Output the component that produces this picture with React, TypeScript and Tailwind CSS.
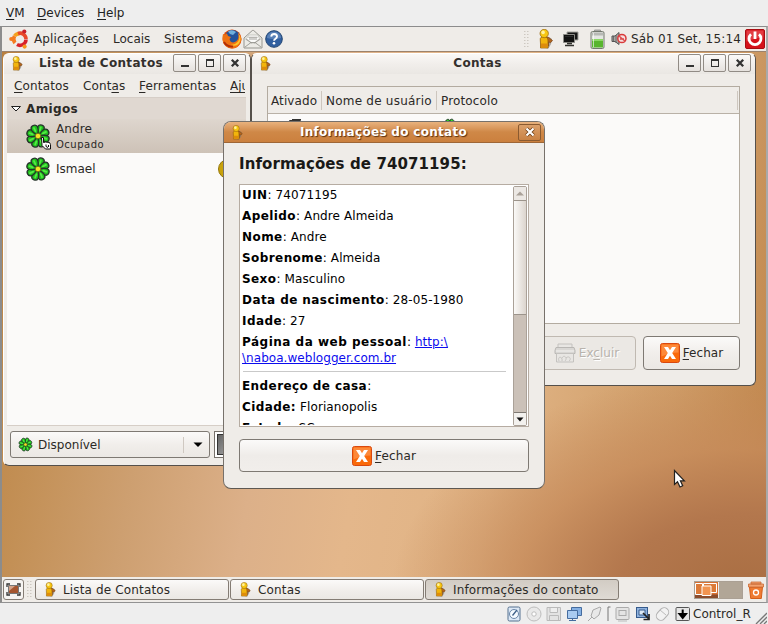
import React from "react";

type Box = { className?: string };

const Buddy = ({ className = "" }: Box) => (
  <svg viewBox="0 0 15 20" className={className}>
    <path d="M4 18.500l6 1 2.500-4.500 1-5-3-2z" fill="#7d756b" opacity=".6" />
    <path d="M8 8l1.500 0 4.500 3.500-1.800 2-2.200-.5v4l-2 1.500z" fill="#b3661f" stroke="#7a4212" strokeWidth=".7" />
    <path d="M1.800 11C1.200 9 3 7.500 5.300 7.500S9.800 9 9.500 12v7H2v-4z" fill="#f2b50c" stroke="#94600a" strokeWidth=".8" />
    <path d="M2.400 14.500h6.700v4.100H2.400z" fill="#dd8c0b" />
    <circle cx="5.700" cy="4.500" r="4.200" fill="#f7c713" stroke="#94600a" strokeWidth=".7" />
    <circle cx="4.600" cy="3.400" r="1.800" fill="#fff2a0" />
  </svg>
);

const petals = [0, 45, 90, 135, 180, 225, 270, 315];
const Flower = ({ className = "" }: Box) => (
  <svg viewBox="0 0 26 26" className={className}>
    <circle cx="13" cy="13" r="8.500" fill="#26332a" />
    {petals.map((a) => (
      <g key={a} transform={`rotate(${a + 20} 13 13)`}>
        <path d="M13 12C11 9.500 9.300 6.500 9.700 4C10.200 .6 15.800 .6 16.300 4C16.700 6.500 15 9.500 13 12z" fill="#1fc01e" stroke="#26332a" strokeWidth="1.300" />
        <path d="M12.700 7.500V4" stroke="#55ea44" strokeWidth="1.800" strokeLinecap="round" />
      </g>
    ))}
    <circle cx="13" cy="13" r="2.800" fill="#f6e424" stroke="#5a6418" strokeWidth=".8" />
  </svg>
);

const CloseBadge = () => (
  <svg viewBox="0 0 20 20" className="h-5 w-5 shrink-0">
    <rect x=".5" y=".5" width="19" height="19" rx="2" fill="#fa6a0a" stroke="#d9480f" />
    <path d="M1.500 1.500h17v8q-8 0-17 4z" fill="#ff9a55" opacity=".65" />
    <path d="M4 4h4l2 3.300L12 4h4l-3.800 6 3.800 6h-4l-2-3.300L8 16H4l3.800-6z" fill="#fff" />
  </svg>
);

const Ubuntu = () => (
  <svg viewBox="0 0 20 20" className="h-5 w-5 shrink-0">
    <g fill="none" strokeWidth="3.600">
      <path d="M5.900 6.400A6 6 0 0 1 11 4" stroke="#f5a11c" transform="translate(-.3 .6)" />
      <path d="M5.500 7.200A6 6 0 0 0 6 14" stroke="#f47b20" />
      <path d="M9 4.500A6 6 0 0 1 17 10" stroke="#e8482a" />
      <path d="M17 10.500A6 6 0 0 1 8 15.500" stroke="#d8202a" />
    </g>
    <circle cx="2.300" cy="10" r="2.100" fill="#f47b20" />
    <circle cx="15.300" cy="2.500" r="2.100" fill="#c8202a" />
    <circle cx="15.600" cy="17.600" r="2.100" fill="#f5941c" />
  </svg>
);

const Firefox = () => (
  <svg viewBox="0 0 20 20" className="h-5 w-5 shrink-0">
    <circle cx="10" cy="10" r="9.500" fill="#d9480c" />
    <circle cx="10.500" cy="8.500" r="7.600" fill="#24539a" />
    <path d="M6 2.500Q10 0 14 3l-3 3-3-1z" fill="#6fb0dc" />
    <path d="M1 5Q3 6 5 4.500L6 7l3 1-1.500 2 1 2.500q3 2 6-.5 3-3 1.500-8Q20 7 19.200 12 17 19.500 10 19.500 2.500 19 .8 12 0 8 1 5z" fill="#ee7112" />
    <path d="M16 4q3 5-.5 9-3 3.500-7 2.500 5 3 8.500-1Q20.500 9 16 4z" fill="#fbc62b" />
    <path d="M2 13q3 5 9 4.500" fill="none" stroke="#b12f08" strokeWidth="1.800" />
  </svg>
);

const Mail = () => (
  <svg viewBox="0 0 20 20" className="h-5 w-5 shrink-0">
    <path d="M1 9l8.300-7.500h1.400L19 9v10H1z" fill="#ecebe6" stroke="#96958f" />
    <path d="M3.500 9.500L6 6h9l1.500 3.500-5 4.500h-3z" fill="#fbfbf9" stroke="#b5b4ae" strokeWidth=".7" />
    <path d="M5.500 8.300h9M6 10h8M2 18l6-4.500h4l6 4.500M2.500 10l6 4M17.500 10l-6 4" stroke="#8f8e88" strokeWidth=".8" fill="none" />
  </svg>
);

const Help = () => (
  <svg viewBox="0 0 18 18" className="mt-px h-[18px] w-[18px] shrink-0">
    <circle cx="9" cy="9" r="8.300" fill="#315f9f" stroke="#234672" />
    <path d="M2 8a7 6.500 0 0 1 14 0q-7 2-14 0z" fill="#7498c8" opacity=".6" />
    <path d="M6.200 6.600Q6.500 4 9.200 4q2.800.1 2.800 2.400 0 1.500-1.700 2.400-1.200.6-1.200 2" fill="none" stroke="#fff" strokeWidth="1.900" />
    <circle cx="9" cy="13.200" r="1.300" fill="#fff" />
  </svg>
);

const Network = () => (
  <svg viewBox="0 0 18 18" className="h-[18px] w-[18px]">
    <path d="M5 2h11v8H5z" fill="#161616" stroke="#a3a39d" />
    <path d="M1.500 4.500h11v8h-11z" fill="#111" stroke="#8b8b86" />
    <path d="M3 15.500h9M5 13.500h5" stroke="#33332f" strokeWidth="1.600" />
    <path d="M3 6.500h8" stroke="#333" strokeWidth=".7" />
  </svg>
);

const Battery = () => (
  <svg viewBox="0 0 15 20" className="h-5 w-[15px]">
    <path d="M4.500 1h6v2h-6z" fill="#b9b9b5" stroke="#82827e" strokeWidth=".7" />
    <rect x="1" y="2.500" width="13" height="17" rx="1.500" fill="#e4e6e2" stroke="#73786e" />
    <path d="M2 3.500h11v3H2z" fill="#b7b9b5" />
    <path d="M2 10h11v8.500H2z" fill="#58b52d" />
    <path d="M2 10h11v2H2z" fill="#8bd764" />
    <path d="M3.500 4v14" stroke="#fff" opacity=".6" />
  </svg>
);

const Speaker = () => (
  <svg viewBox="0 0 16 14" className="h-[14px] w-4">
    <path d="M1 4h3l4-3.500v12L4 9.500H1z" fill="#a9a9a5" stroke="#555" />
    <path d="M2.500 4v5.500M5 3v8" stroke="#555" strokeWidth=".7" />
    <circle cx="10.900" cy="6.500" r="4.100" fill="#f5dede" stroke="#d93a3a" strokeWidth="1.500" />
    <path d="M8 4l5.800 5M9 7h4" stroke="#dc4c4c" strokeWidth="1.400" />
  </svg>
);

const Power = () => (
  <svg viewBox="0 0 20 20" className="h-5 w-5">
    <rect x=".5" y=".5" width="19" height="19" rx="1.500" fill="#d5121a" stroke="#a80c12" />
    <path d="M1.500 1.500h17v7q-8 0-17 4z" fill="#f0666a" opacity=".5" />
    <path d="M6 5.200a6 6 0 1 0 8 0" fill="none" stroke="#fff" strokeWidth="2.800" />
    <path d="M10 2.500v7.500" stroke="#fff" strokeWidth="2.800" />
  </svg>
);

const Grip = () => (
  <svg viewBox="0 0 5 17" className="h-[17px] w-[5px]">
    {[0, 3, 6, 9, 12, 15].map((y) => (
      <path key={y} d={`M0 ${y + 0.5}h1.500M3 ${y + 0.5}h1.500`} stroke="#cdc8c1" />
    ))}
  </svg>
);

const U = ({ children }: { children: React.ReactNode }) => (
  <span className="underline decoration-1 underline-offset-2">{children}</span>
);

const WinButton = ({ kind }: { kind: "min" | "max" | "close" }) => (
  <span className="flex h-[18px] w-[23px] items-center justify-center rounded-[2px] border border-[#918b85] bg-linear-to-b from-[#fbfaf9] to-[#e6e2de]">
    <svg viewBox="0 0 10 10" className="h-[10px] w-[10px]" fill="none" stroke="#333">
      {kind === "min" && <path d="M1 8h8" strokeWidth="2" />}
      {kind === "max" && (
        <>
          <rect x="1.500" y="1.500" width="7" height="7" />
          <path d="M1 2h8" strokeWidth="2" />
        </>
      )}
      {kind === "close" && <path d="M1.800 1.800l6.400 6.400M8.200 1.800L1.800 8.200" strokeWidth="2.300" />}
    </svg>
  </span>
);

const TitleBar = ({ title, titleClass }: { title: string; titleClass: string }) => (
  <div className="flex h-5 shrink-0 items-start bg-linear-to-b from-[#faf8f6] via-[#f1eeeb] to-[#eae7e3] pr-[4px] pl-[8px]">
    <Buddy className="mt-[2px] h-[15px] w-[11px]" />
    <b className={`flex-1 text-center text-[12px] leading-[18px] text-[#33302d] ${titleClass}`}>{title}</b>
    <span className="flex gap-[2px]">
      <WinButton kind="min" />
      <WinButton kind="max" />
      <WinButton kind="close" />
    </span>
  </div>
);

const ContactsWindow = () => (
  <section className="absolute top-[26px] left-px flex h-[413px] w-[248px] flex-col overflow-hidden rounded-[6px] border border-[#55504b] border-t-white border-l-white bg-[#efece8]">
    <TitleBar title="Lista de Contatos" titleClass="pl-[6px] tracking-[.32px]" />
    <div className="flex flex-1 flex-col pr-[4px] pl-[3px]">
      <nav className="flex h-6 shrink-0 items-center overflow-hidden border-b border-[#d6cec7] pt-px pl-[7px] whitespace-nowrap">
        <span className="w-[69px] shrink-0 tracking-[.15px]"><U>C</U>ontatos</span>
        <span className="w-[56px] shrink-0 tracking-[.1px]">Cont<U>a</U>s</span>
        <span className="w-[91px] shrink-0 tracking-[.15px]"><U>F</U>erramentas</span>
        <span className="w-[15px] shrink-0 overflow-hidden"><U>Aju</U></span>
      </nav>
      <div className="flex flex-1 flex-col overflow-hidden border-b border-[#d6cec7] bg-[#fbfaf9]">
        <div className="flex h-[21px] shrink-0 items-center bg-[#e0d8d1] pl-[3px]">
          <svg viewBox="0 0 12 8" className="h-2 w-3"><path d="M1.500 1.500h9L6 6z" fill="#fff" stroke="#222" /></svg>
          <b className="ml-[4px] text-[12px] tracking-[.35px]">Amigos</b>
        </div>
        <div className="flex h-[34px] shrink-0 items-center bg-linear-to-b from-[#ded6ce] to-[#cdc2b7] pl-[18px]">
          <span className="relative flex">
            <Flower className="h-[26px] w-[26px]" />
            <svg viewBox="0 0 12 14" className="absolute top-[13px] left-[15px] h-[14px] w-3">
              <path d="M1.500 1.500h2v5l2-.5 4 .5 1 2v4.500h-5L2 9.500z" fill="#fff" stroke="#111" />
              <path d="M6 8.500v2l2 1M8.500 9v2" stroke="#111" fill="none" />
            </svg>
          </span>
          <span className="ml-[5px] flex flex-col pt-px leading-[15px]">
            <span className="tracking-[.1px]">Andre</span>
            <span className="text-[10px] tracking-[.5px]">Ocupado</span>
          </span>
        </div>
        <div className="flex h-[32px] shrink-0 items-center pl-[18px]">
          <Flower className="h-[26px] w-[26px]" />
          <span className="ml-[5px]">Ismael</span>
          <span className="mr-[8px] ml-auto h-5 w-5 rounded-full border border-[#94760b] bg-[#c9a20a]" />
        </div>
      </div>
      <div className="flex h-[39px] shrink-0 gap-1 pt-[5px] pl-[3px]">
        <div className="flex h-[27px] w-[200px] shrink-0 items-center rounded-[3px] border border-[#7e7973] bg-linear-to-b from-[#fbfaf9] via-[#f1eeeb] to-[#ebe8e4] pr-[6px] pl-[7px]">
          <Flower className="h-[15px] w-[15px]" />
          <span className="ml-[5px] flex-1 pt-px">Disponível</span>
          <span className="h-4 w-px bg-[#cfc8c1]" />
          <svg viewBox="0 0 10 6" className="ml-[9px] h-[6px] w-[10px]"><path d="M.5.5h9L5 5z" fill="#000" /></svg>
        </div>
        <div className="h-[27px] w-6 border border-[#77716b] bg-white p-[2px]">
          <div className="h-full border border-[#333] bg-linear-to-br from-[#666] to-[#aaa]" />
        </div>
      </div>
    </div>
  </section>
);

const AccountsWindow = () => (
  <section className="absolute top-[26px] left-[249px] flex h-[333px] w-[505px] flex-col overflow-hidden rounded-[6px] border border-[#55504b] border-t-white bg-[#efece8]">
    <TitleBar title="Contas" titleClass="pl-[6px] tracking-[.3px]" />
    <div className="mx-[15px] mt-[12px] flex h-[238px] shrink-0 flex-col border border-[#b3aba0] bg-[#fbfaf9]">
      <div className="flex h-[27px] items-center border-b border-[#b9b1a7] bg-[#efece8] pl-[3px]">
        <span className="h-[19px] w-[51px] border-r border-[#cdc6be] pt-px tracking-[.1px]">Ativado</span>
        <span className="h-[19px] w-[115px] border-r border-[#cdc6be] pt-px pl-[4px] tracking-[.23px]">Nome de usuário</span>
        <span className="mr-px h-[19px] flex-1 border-r border-[#cdc6be] pt-px pl-[4px] tracking-[.15px]">Protocolo</span>
      </div>
      <div className="flex pt-[4px] pl-[19px]">
        <svg viewBox="0 0 14 14" className="h-[14px] w-[14px]"><path d="M2.500 2.500h11v11h-11zM5 1.500h9" fill="#fff" stroke="#333" /></svg>
        <Flower className="ml-[141px] h-4 w-4" />
      </div>
    </div>
    <div className="mt-[12px] flex justify-end gap-[7px] pr-[15px]">
      <div className="flex h-[34px] w-[98px] items-center justify-center gap-[3px] rounded-[4px] border border-[#c0b9b1] bg-[#ebe8e4] pr-[1px] text-[#b8b3ad] [text-shadow:1px_1px_#fff]">
        <svg viewBox="0 0 22 20" className="h-5 w-[22px]">
          <path d="M4 1h14v4H4z" fill="#e8e6e3" stroke="#c4c2bf" />
          <path d="M2 4.500h18l1 3v3H1v-3z" fill="#d9d7d4" stroke="#b9b7b4" />
          <path d="M2 8h18" stroke="#f4f3f1" />
          <path d="M2.500 10.500h17v8.500h-17z" fill="#e8e6e3" stroke="#c4c2bf" />
          <path d="M5 18c-2-5 4-5 3 0m0-3c2-4 6 0 3 3m1-3c3-3 6 1 3 3" fill="none" stroke="#c7c5c2" />
        </svg>
        <span>Ex<U>c</U>luir</span>
      </div>
      <div className="flex h-[34px] w-[97px] items-center justify-center gap-[3px] rounded-[4px] border border-[#7e7973] bg-linear-to-b from-[#fbfaf9] via-[#f1eeeb] to-[#ebe8e4]">
        <CloseBadge />
        <span className="tracking-[.1px]"><U>F</U>echar</span>
      </div>
    </div>
  </section>
);

const Row = ({ label, value, colon = ":" }: { label: string; value: string; colon?: string }) => (
  <p className="h-[21px] tracking-[.1px]"><b className="tracking-[.42px]">{label}</b>{colon} {value}</p>
);

const InfoDialog = () => (
  <section className="absolute top-[94px] left-[221px] flex h-[368px] w-[322px] flex-col overflow-hidden rounded-[8px] border border-[#77716b] border-b-[#5d5852] bg-[#efece8]">
    <header className="flex h-[21px] shrink-0 items-center border-b border-[#9e6636] bg-linear-to-b from-[#e9b27d] via-[#cf8847] to-[#cb803e] pr-[3px] pl-[8px]">
      <Buddy className="h-[15px] w-[11px]" />
      <b className="flex-1 pl-[6px] text-center text-[12px] tracking-[.3px] text-white [text-shadow:1px_1px_1px_#5b3010]">Informações do contato</b>
      <span className="flex h-[17px] w-[23px] items-center justify-center rounded-[2px] border border-[#8a5a30] bg-linear-to-b from-[#dba06a] to-[#c98244]">
        <svg viewBox="0 0 10 10" className="h-[10px] w-[10px]">
          <path d="M1.500 1.500l7 7M8.500 1.500l-7 7" stroke="#6d3d15" strokeWidth="3.800" />
          <path d="M1.500 1.500l7 7M8.500 1.500l-7 7" stroke="#fff" strokeWidth="2.200" />
        </svg>
      </span>
    </header>
    <h1 className="mt-[11px] ml-[15px] h-[30px] text-[15px] leading-5 font-bold tracking-[.1px] whitespace-nowrap text-[#1a1917]">Informações de 74071195:</h1>
    <div className="ml-[15px] flex h-[243px] w-[290px] shrink-0 border border-[#b6aca2] bg-[#fff]">
      <div className="h-[240px] w-[273px] shrink-0 overflow-hidden pt-[2px] pl-[2px] leading-4 text-black">
        <Row label="UIN" value="74071195" />
        <Row label="Apelido" value="Andre Almeida" />
        <Row label="Nome" value="Andre" />
        <Row label="Sobrenome" value="Almeida" />
        <Row label="Sexo" value="Masculino" />
        <Row label="Data de nascimento" value="28-05-1980" />
        <Row label="Idade" value="27" />
        <p className="h-[37px] tracking-[.05px]">
          <b className="tracking-[.5px]">Página da web pessoal</b>: <span className="text-[#0c0cee] underline">http:\<br />\naboa.weblogger.com.br</span>
        </p>
        <div className="mr-[7px] ml-px h-[7px] border-t border-[#c9c9c9]" />
        <Row label="Endereço de casa" value="" />
        <Row label="Cidade:" colon="" value="Florianopolis" />
        <Row label="Estado" value="SC" />
      </div>
      <div className="mt-px flex w-[14px] flex-col rounded-[2px] border border-[#aaa198] bg-[#cbc1b8]">
        <span className="flex h-[13px] items-center justify-center bg-[#ece8e4]">
          <svg viewBox="0 0 8 5" className="h-[5px] w-2"><path d="M0 4.500L4 .5l4 4z" fill="#aaa198" /></svg>
        </span>
        <span className="h-[115px] border-y border-[#9c948b] bg-linear-to-r from-[#faf9f7] to-[#dcd5ce]" />
        <span className="mt-auto flex h-[13px] items-center justify-center border-t border-[#7e7973] bg-[#f3f1ee]">
          <svg viewBox="0 0 8 5" className="h-[5px] w-2"><path d="M.5.5h7L4 4.500z" fill="#111" /></svg>
        </span>
      </div>
    </div>
    <div className="mt-[12px] ml-[15px] flex h-[33px] w-[290px] items-center justify-center gap-[3px] rounded-[4px] border border-[#7e7973] bg-linear-to-b from-[#fbfaf9] via-[#efece9] to-[#f1eeeb]">
      <CloseBadge />
      <span className="tracking-[.15px]"><U>F</U>echar</span>
    </div>
  </section>
);

const Task = ({ label, active = false }: { label: string; active?: boolean }) => (
  <div className={`flex h-[21px] w-[194px] items-center rounded-[3px] border border-[#847c74] pl-[9px] tracking-[.15px] ${active ? "bg-linear-to-b from-[#d2ccc4] to-[#dfdad4]" : "bg-linear-to-b from-[#fbfaf9] via-[#f2efec] to-[#ebe8e4]"}`}>
    <Buddy className="mr-[7px] h-[15px] w-[11px]" />
    {label}
  </div>
);

const StatusIcons = () => (
  <svg viewBox="0 0 186 16" className="h-4 w-[186px]" fill="none">
    <rect x="1" y="1" width="12" height="14" rx="1.500" fill="#dce8f6" stroke="#55708f" />
    <circle cx="7" cy="8" r="4.500" fill="#f5faff" stroke="#6a86a8" />
    <path d="M5.500 9.500L10 4" stroke="#3d5e88" strokeWidth="1.300" />
    <circle cx="27" cy="8" r="7" fill="#e9e9e9" stroke="#bdbdbd" />
    <circle cx="27" cy="8" r="2.200" fill="#fff" stroke="#bdbdbd" />
    <path d="M40 1.500h13.500v13H40zM43 1.500v5h7.500v-5M42.500 14.500v-5h9v5" fill="#e3e3e3" stroke="#bababa" />
    <path d="M64.500 1.500h10v8h-10z" fill="#86b1e4" stroke="#456c9f" />
    <path d="M60.500 4.500h10v8h-10z" fill="#a9cbf1" stroke="#456c9f" />
    <path d="M62 14.500h7M65.500 12.500v2" stroke="#456c9f" />
    <path d="M81 15l4-4m-1-1l3 3 5-4 2-7-1-1-7 3z" fill="#e8e8e8" stroke="#a8a8a8" />
    <path d="M103.500 1h-2.500v14" stroke="#777" />
    <rect x="109" y="1.500" width="13" height="12" rx="1" fill="#e4e4e4" stroke="#aaa" />
    <rect x="112" y="4.500" width="7" height="5" stroke="#aaa" />
    <path d="M111 15h9" stroke="#bbb" />
    <rect x="129.500" y="1.500" width="11" height="10" fill="#8fb2de" stroke="#355a8c" />
    <path d="M132 4h6v5h-6z" fill="#dce9f7" stroke="#355a8c" />
    <path d="M136 7l6 6m0-5v5.500h-5.500" stroke="#222" strokeWidth="1.700" />
    <rect x="151" y="1" width="9" height="14" rx="4.500" transform="rotate(42 155.500 8)" fill="#f2f2f2" stroke="#b0b0b0" />
    <path d="M153 4l6 5" stroke="#bcbcbc" />
    <rect x="169" y="1.500" width="13.500" height="13" rx="1" fill="#e6e6e6" stroke="#555" />
    <path d="M175.700 3.500v6M172.500 8l3.200 4 3.200-4z" stroke="#000" strokeWidth="2" fill="#000" />
  </svg>
);

const App = () => (
  <main className="relative flex h-[624px] w-[768px] flex-col overflow-hidden bg-[#eeeeee] font-['DejaVu_Sans',sans-serif] text-[12px] leading-[18px] text-[#2b2926]">
    <nav className="flex h-[26px] shrink-0 items-center pl-[6px] text-[#222]">
      <span className="w-[31px]"><U>V</U>M</span>
      <span className="w-[60px]"><U>D</U>evices</span>
      <span><U>H</U>elp</span>
    </nav>
    <div className="relative flex h-[577px] shrink-0 flex-col border-x-2 border-y border-t-[#8c8c8c] border-r-[#a9a9a9] border-b-[#929292] border-l-[#8c8c8c] bg-[radial-gradient(ellipse_350px_220px_at_740px_565px,#a96e42_0%,#b3774d_35%,#c68a5ac0_65%,#c98f6000_100%),linear-gradient(100deg,#b9803f_0%,#c39056_12%,#cd9f70_24%,#dcb089_38%,#e4b78b_50%,#e0b384_66%,#cf9d68_85%,#bd8246_100%)]">
      <div className="flex h-6 shrink-0 items-center bg-[#efece8] pr-px pl-[7px]">
        <Ubuntu />
        <span className="ml-[5px] w-[79px] tracking-[.1px]">Aplicações</span>
        <span className="w-[51px]">Locais</span>
        <span className="w-[58px] tracking-[.2px]">Sistema</span>
        <Firefox />
        <span className="ml-px flex gap-[2px]"><Mail /><Help /></span>
        <span className="ml-auto flex items-center">
          <Grip />
          <Buddy className="ml-[9px] h-5 w-[16px]" />
          <span className="ml-[8px]"><Network /></span>
          <span className="ml-[10px]"><Battery /></span>
          <span className="ml-[6px]"><Speaker /></span>
          <span className="ml-[4px] w-[114px] tracking-[.15px]">Sáb 01 Set, 15:14</span>
          <Power />
        </span>
      </div>
      <div className="flex-1 border-t border-[#9c826b]" />
      <footer className="flex h-[25px] shrink-0 items-center bg-[#efece8] pl-px">
        <span className="flex h-[21px] w-[21px] items-center justify-center rounded-[3px] border border-[#847c74] bg-[#f6f4f2]">
          <svg viewBox="0 0 15 13" className="h-[13px] w-[15px]">
            <path d="M1 4V1h3M11 1h3v3M14 9v3h-3M4 12H1V9" fill="none" stroke="#333" strokeWidth="1.300" />
            <path d="M2.500 2.500h10v8h-10z" fill="#a5552f" stroke="#777" />
            <path d="M3 3h6L3 8z" fill="#d4a389" />
          </svg>
        </span>
        <span className="mr-[3px] ml-[3px]"><Grip /></span>
        <div className="flex gap-px"><Task label="Lista de Contatos" /><Task label="Contas" /><Task label="Informações do contato" active /></div>
        <span className="mr-[5px] ml-auto flex h-[18px] w-[49px] border border-[#aaa094] bg-[#b1a697]">
          <svg viewBox="0 0 47 16" className="h-4 w-[47px]">
            <path d="M0 0h23v16H0z" fill="#d87132" />
            <path d="M0 12.500h23V16H0z" fill="#8b4c2c" />
            <path d="M.5 1.500h7v11h-7zM8.500 1.500h13v9h-13z" fill="#dc7a38" stroke="#fff" />
            <path d="M7 4h9v9.500H7z" fill="#f19450" stroke="#fff" />
            <path d="M23.500 0v16" stroke="#eee" />
          </svg>
        </span>
        <svg viewBox="0 0 16 18" className="mr-[2px] h-[18px] w-4">
          <path d="M1.500 6h13l-1.200 11.500H2.700z" fill="#ef7b32" stroke="#d35f1b" />
          <path d="M.5 3h15v3H.5zM3 1h10v2H3z" fill="#f3a26f" stroke="#c96b35" strokeWidth=".8" />
          <circle cx="8" cy="11.500" r="2.500" fill="none" stroke="#fff" strokeWidth="1.300" />
        </svg>
      </footer>
      <ContactsWindow />
      <AccountsWindow />
      <InfoDialog />
      <svg viewBox="0 0 14 20" className="absolute top-[442px] left-[671px] h-5 w-[14px]">
        <path d="M1.500 1.500v14l3-2.700 2.500 5.200 2.700-1.200-2.300-5h4z" fill="#fff" stroke="#22201e" strokeWidth="1.200" />
      </svg>
    </div>
    <footer className="flex flex-1 items-center justify-end pt-px pr-[1px]">
      <StatusIcons />
      <span className="w-[61px]">Control_R</span>
      <svg viewBox="0 0 13 13" className="h-[13px] w-[13px] self-end"><path d="M2 13L13 2M6 13l7-7M10 13l3-3" stroke="#777" strokeWidth="1.300" /></svg>
    </footer>
  </main>
);

export default App;
